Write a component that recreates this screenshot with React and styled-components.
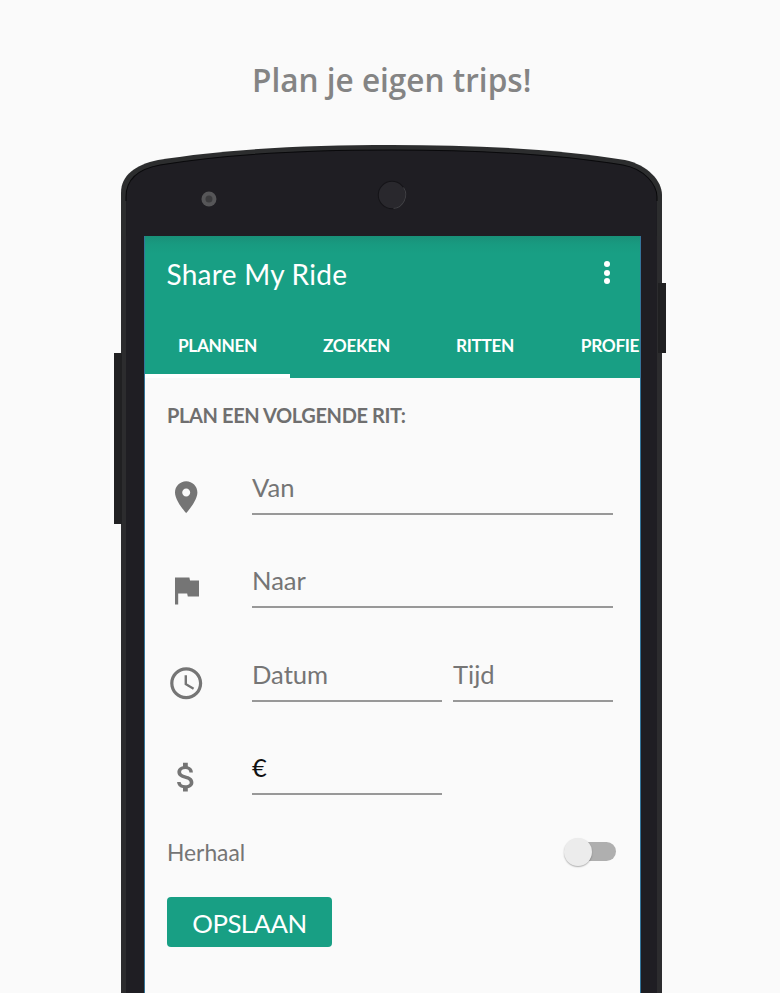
import React from "react";
import styled, { createGlobalStyle } from "styled-components";

const GlobalStyle = createGlobalStyle`
  * { box-sizing: border-box; }
  body { margin: 0; background: #fafafa; font-family: "Lato", sans-serif; }
`;

const Page = styled.main`
  width: 780px;
  height: 993px;
  overflow: hidden;
  display: flex;
  flex-direction: column;
  background: #fafafa;
`;

const Tagline = styled.h1`
  margin: 0 0 0 252px;
  height: 145px;
  padding-top: 57px;
  font: 600 33px/46px "Open Sans", sans-serif;
  letter-spacing: 0;
  color: #848484;
  white-space: nowrap;
  transform: scaleX(0.956);
  transform-origin: left;
`;

const Device = styled.section`
  position: relative;
  width: 541px;
  height: 848px;
  margin-left: 121px;
  display: flex;
  flex-direction: column;
`;

const SideKey = styled.i`
  position: absolute;
  top: ${(p) => p.$top}px;
  ${(p) => p.$side}: ${(p) => p.$offset}px;
  width: 8px;
  height: ${(p) => p.$height}px;
  background: #202022;
`;

const DeviceTop = styled.svg`
  display: block;
  flex: none;
  width: 541px;
  height: 91px;
`;

const DeviceBody = styled.div`
  flex: 1;
  display: flex;
  padding: 0 16px 0 18px;
  border: solid #2c2c2e;
  border-width: 0 5px;
  background: #1f1e23;
`;

const Screen = styled.div`
  flex: 1;
  overflow: hidden;
  border: solid #34759a;
  border-width: 0 1px;
  background: #fafafa;
`;

const AppBar = styled.header`
  height: 141.5px;
  display: flex;
  flex-direction: column;
  background: linear-gradient(#199078, #189a80 8px, #189f84 18px);
  color: #fff;
`;

const TitleRow = styled.div`
  flex: 1;
  display: flex;
  align-items: center;
  justify-content: space-between;
  padding: 0 30px 4px 21.5px;
`;

const AppTitle = styled.h2`
  margin: 0;
  font-weight: 400;
  font-size: 28px;
  letter-spacing: 0.27px;
  line-height: 36px;
`;

const MenuButton = styled.button`
  display: flex;
  flex-direction: column;
  gap: 2.4px;
  padding: 0;
  margin-top: -2px;
  border: 0;
  background: none;
`;

const Dot = styled.i`
  width: 6px;
  height: 6px;
  border-radius: 50%;
  background: #fff;
`;

const Tabs = styled.nav`
  display: flex;
  height: 62px;
  width: 620px;
`;

const Tab = styled.a`
  flex: none;
  width: ${(p) => p.$width}px;
  padding-top: 18px;
  text-align: center;
  font-weight: 700;
  font-size: 17.3px;
  letter-spacing: -0.35px;
  line-height: 24px;
  border-bottom: 4px solid ${(p) => (p.$active ? "#fff" : "transparent")};
`;

const Form = styled.form`
  padding: 24px 27px 0 22px;
  color: #757575;
`;

const FormTitle = styled.h3`
  margin: 0 0 22px;
  font-size: 20px;
  letter-spacing: -0.38px;
  line-height: 26px;
  font-weight: 700;
  color: #6f6f6f;
`;

const FieldRow = styled.div`
  height: 93.3px;
  display: flex;
  align-items: flex-start;
`;

const Icon = styled.svg`
  flex: none;
  width: 38.4px;
  height: 38.4px;
  margin: 28.4px 46.9px 0 -0.3px;
  fill: #757575;
`;

const Fields = styled.div`
  width: 361px;
  display: flex;
  gap: 11px;
`;

const Field = styled.div`
  width: ${(p) => p.$width}px;
  height: 65.7px;
  padding-top: 20.5px;
  border-bottom: 2px solid #989898;
  font-size: 25.6px;
  line-height: 34px;
  color: ${(p) => (p.$filled ? "#111" : "#757575")};
`;

const RepeatRow = styled.div`
  display: flex;
  align-items: center;
  justify-content: space-between;
  height: 34px;
  margin-top: 12px;
  margin-right: -3px;
  font-size: 22.8px;
`;

const Switch = styled.span`
  display: flex;
  align-items: center;
  width: 49px;
  height: 19.5px;
  border-radius: 10px;
  background: #afafaf;
`;

const Thumb = styled.i`
  flex: none;
  width: 28px;
  height: 28px;
  margin-left: -3px;
  border-radius: 50%;
  background: #ececec;
  box-shadow: 0 1px 1.5px rgba(0, 0, 0, 0.3);
`;

const SaveButton = styled.button`
  display: block;
  width: 165px;
  height: 50px;
  margin-top: 28px;
  padding: 1px 0 0;
  border: 0;
  border-radius: 4px;
  background: #189f84;
  color: #fff;
  font: 400 25.8px/50px "Lato", sans-serif;
  letter-spacing: -0.5px;
`;

const icons = {
  place:
    "M12 2C8.13 2 5 5.13 5 9c0 5.25 7 13 7 13s7-7.75 7-13c0-3.87-3.13-7-7-7zm0 9.5c-1.38 0-2.5-1.12-2.5-2.5s1.12-2.5 2.5-2.5 2.5 1.12 2.5 2.5-1.12 2.5-2.5 2.5z",
  flag: "M14.4 6L14 4H5v17h2v-7h5.6l.4 2h7V6z",
  clock:
    "M11.99 2C6.47 2 2 6.48 2 12s4.47 10 9.99 10C17.52 22 22 17.52 22 12S17.52 2 11.99 2zM12 20c-4.42 0-8-3.58-8-8s3.58-8 8-8 8 3.58 8 8-3.58 8-8 8zm.5-13H11v6l5.25 3.15.75-1.23-4.5-2.67z",
  money:
    "M11.8 10.9c-2.27-.59-3-1.2-3-2.15 0-1.09 1.01-1.85 2.7-1.85 1.78 0 2.44.85 2.5 2.1h2.21c-.07-1.72-1.12-3.3-3.21-3.81V3h-3v2.16c-1.94.42-3.5 1.68-3.5 3.61 0 2.31 1.91 3.46 4.7 4.13 2.5.6 3 1.48 3 2.41 0 .69-.49 1.79-2.7 1.79-2.06 0-2.87-.92-2.98-2.1h-2.2c.12 2.19 1.76 3.42 3.68 3.83V21h3v-2.15c1.95-.37 3.5-1.5 3.5-3.55 0-2.84-2.43-3.81-4.7-4.4z",
};

const tabs = [
  { label: "PLANNEN", width: 145, active: true },
  { label: "ZOEKEN", width: 133 },
  { label: "RITTEN", width: 124 },
  { label: "PROFIE", width: 126 },
];

const rows = [
  { icon: "place", fields: [{ text: "Van", width: 361 }] },
  { icon: "flag", fields: [{ text: "Naar", width: 361 }] },
  {
    icon: "clock",
    fields: [
      { text: "Datum", width: 190 },
      { text: "Tijd", width: 160 },
    ],
  },
  { icon: "money", fields: [{ text: "€", width: 190, filled: true }] },
];

function PhoneTop() {
  return (
    <DeviceTop viewBox="0 0 540 91" preserveAspectRatio="none" aria-hidden="true">
      <path
        fill="#2c2d2e"
        d="M0 91V48C0 30 14 20 37 15C105 4 185 0 270 0S435 4 503 15C526 20 540 36 540 50V91Z"
      />
      <path
        fill="#1f1e23"
        stroke="#09090b"
        d="M5 93V52C5 35 17 24 39 20C105 9 185 5 270 5S435 9 501 20C523 24 535 40 535 52V93Z"
      />
      <path fill="#1f1e23" d="M5 56H535V91H5Z" />
      <path fill="#2c2d2e" d="M0 56H5V91H0ZM535 56H540V91H535Z" />
      <circle cx="87.8" cy="54" r="7.5" fill="#565658" />
      <circle cx="87.8" cy="54" r="3.5" fill="#3c3c3e" />
      <circle cx="270.5" cy="50" r="13.7" fill="#29282d" stroke="#151418" />
      <path d="M272 63.5A13.7 13.7 0 0 0 282 42.5" fill="none" stroke="#414145" />
    </DeviceTop>
  );
}

export default function App() {
  return (
    <Page>
      <GlobalStyle />
      <Tagline>Plan je eigen trips!</Tagline>
      <Device>
        <SideKey $side="left" $offset={-7} $top={208} $height={171} />
        <SideKey $side="right" $offset={-4} $top={138} $height={70} />
        <PhoneTop />
        <DeviceBody>
          <Screen>
            <AppBar>
              <TitleRow>
                <AppTitle>Share My Ride</AppTitle>
                <MenuButton aria-label="Menu">
                  <Dot />
                  <Dot />
                  <Dot />
                </MenuButton>
              </TitleRow>
              <Tabs>
                {tabs.map((t) => (
                  <Tab key={t.label} $width={t.width} $active={t.active}>
                    {t.label}
                  </Tab>
                ))}
              </Tabs>
            </AppBar>
            <Form>
              <FormTitle>PLAN EEN VOLGENDE RIT:</FormTitle>
              {rows.map((row) => (
                <FieldRow key={row.icon}>
                  <Icon viewBox="0 0 24 24">
                    <path d={icons[row.icon]} />
                  </Icon>
                  <Fields>
                    {row.fields.map((f) => (
                      <Field key={f.text} $width={f.width} $filled={f.filled}>
                        {f.text}
                      </Field>
                    ))}
                  </Fields>
                </FieldRow>
              ))}
              <RepeatRow>
                Herhaal
                <Switch>
                  <Thumb />
                </Switch>
              </RepeatRow>
              <SaveButton type="button">OPSLAAN</SaveButton>
            </Form>
          </Screen>
        </DeviceBody>
      </Device>
    </Page>
  );
}
